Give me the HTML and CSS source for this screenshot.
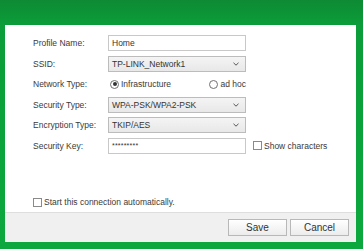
FILE: index.html
```html
<!DOCTYPE html>
<html lang="en">
<head>
    <meta charset="UTF-8">
    <title>Profile</title>
    <link rel="stylesheet" href="styles.css">
</head>
<body>
<div class="window">
    <div class="panel">
        <div class="content">
            <!-- Profile form -->
            <div class="profile-form">
                <span class="label">Profile Name:</span>
                <input type="text" class="field" value="Home">
                <span></span>

                <span class="label">SSID:</span>
                <div class="field select">
                    <span>TP-LINK_Network1</span>
                    <svg width="6" height="4" viewBox="0 0 6 4"><path d="M0.5 0.8 L3 3.2 L5.5 0.8" fill="none" stroke="#555" stroke-width="1"/></svg>
                </div>
                <span></span>

                <span class="label">Network Type:</span>
                <div class="radios">
                    <span class="radio-item"><span class="radio checked"></span>Infrastructure</span>
                    <span class="radio-item"><span class="radio"></span>ad hoc</span>
                </div>
                <span></span>

                <span class="label">Security Type:</span>
                <div class="field select">
                    <span>WPA-PSK/WPA2-PSK</span>
                    <svg width="6" height="4" viewBox="0 0 6 4"><path d="M0.5 0.8 L3 3.2 L5.5 0.8" fill="none" stroke="#555" stroke-width="1"/></svg>
                </div>
                <span></span>

                <span class="label">Encryption Type:</span>
                <div class="field select">
                    <span>TKIP/AES</span>
                    <svg width="6" height="4" viewBox="0 0 6 4"><path d="M0.5 0.8 L3 3.2 L5.5 0.8" fill="none" stroke="#555" stroke-width="1"/></svg>
                </div>
                <span></span>

                <span class="label">Security Key:</span>
                <input type="text" class="field key" value="*********">
                <span class="check-item show"><span class="checkbox"></span>Show characters</span>
            </div>

            <span class="check-item auto"><span class="checkbox"></span>Start this connection automatically.</span>
        </div>

        <!-- Buttons -->
        <div class="footer">
            <button class="btn">Save</button>
            <button class="btn">Cancel</button>
        </div>
    </div>
</div>
</body>
</html>
```

FILE: styles.css
```css
body {
    margin: 0;
    font-family: "Liberation Sans", Arial, sans-serif;
    font-size: 8.5px;
    color: #3a3a3a;
}
.window {
    width: 363px;
    height: 249px;
    box-sizing: border-box;
    padding: 25px 7px 7px 5px;
    background: linear-gradient(#0e8a34, #0b9d39 25px, #0ca83e);
}
.panel {
    height: 217px;
    background: #fff;
    display: flex;
    flex-direction: column;
}
.content {
    flex: 1;
    display: flex;
    flex-direction: column;
    padding: 10px 0 5px 28px;
}
.profile-form {
    display: grid;
    grid-template-columns: 75px 138px auto;
    grid-auto-rows: 16px;
    row-gap: 4.5px;
    align-items: center;
}
.field {
    box-sizing: border-box;
    width: 138px;
    height: 16px;
    margin: 0;
    padding: 0 3px;
    border: 1px solid #c8c8c8;
    background: #fff;
    font-family: inherit;
    font-size: 8.5px;
    color: #333;
    outline: none;
}
.key {
    font-size: 7px;
    letter-spacing: 0.2px;
}
.select {
    display: flex;
    align-items: center;
    justify-content: space-between;
    padding: 0 6px 0 3px;
    border-color: #bcbcbc;
    background: linear-gradient(#f4f4f4, #e8e8e8);
}
.radios {
    display: flex;
    justify-content: space-between;
    padding: 0 0 0 2px;
}
.radio-item,
.check-item {
    display: flex;
    align-items: center;
    gap: 2px;
}
.radio {
    width: 7px;
    height: 7px;
    border: 1px solid #707070;
    border-radius: 50%;
    background: #fff;
    position: relative;
}
.radio.checked::after {
    content: "";
    position: absolute;
    top: 1.5px;
    left: 1.5px;
    width: 4px;
    height: 4px;
    border-radius: 50%;
    background: #333;
}
.checkbox {
    width: 7px;
    height: 7px;
    border: 1px solid #8a8a8a;
    background: #fff;
}
.show {
    margin-left: 7px;
}
.auto {
    margin-top: auto;
}
.footer {
    height: 29px;
    border-top: 1px solid #dedede;
    background: #f0f0f0;
    display: flex;
    justify-content: flex-end;
    align-items: center;
    gap: 3px;
    padding-right: 7px;
}
.btn {
    width: 59px;
    height: 17px;
    border: 1px solid #b8b8b8;
    background: linear-gradient(#ffffff, #ececec);
    font-family: inherit;
    font-size: 10px;
    color: #333;
    padding: 0;
}
```
